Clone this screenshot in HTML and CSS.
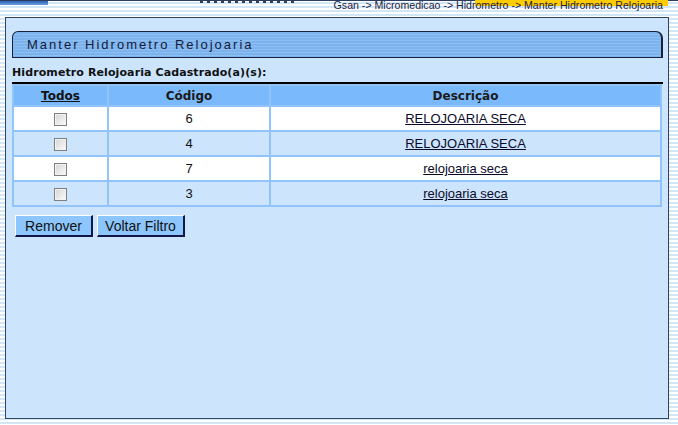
FILE: index.html
```html
<!DOCTYPE html>
<html lang="pt">
<head>
    <meta charset="UTF-8">
    <title>Manter Hidrometro Relojoaria</title>
    <link rel="stylesheet" href="styles.css">
</head>
<body>

<div class="top">
    <div class="top__logo"></div>
    <div class="top__marks"></div>
    <div class="top__crumb">
        Gsan -&gt; Micromedicao -&gt; Hidrometro -&gt; Manter Hidrometro Relojoaria
    </div>
</div>

<div class="panel">
    <div class="panel__tab">Manter Hidrometro Relojoaria</div>

    <div class="panel__label">Hidrometro Relojoaria Cadastrado(a)(s):</div>

    <table class="grid">
        <tr class="grid__head">
            <th class="grid__check"><a href="#">Todos</a></th>
            <th class="grid__code">Código</th>
            <th>Descrição</th>
        </tr>
        <tr class="grid__row grid__row--white">
            <td><span class="box"></span></td>
            <td>6</td>
            <td><a href="#">RELOJOARIA SECA</a></td>
        </tr>
        <tr class="grid__row">
            <td><span class="box"></span></td>
            <td>4</td>
            <td><a href="#">RELOJOARIA SECA</a></td>
        </tr>
        <tr class="grid__row grid__row--white">
            <td><span class="box"></span></td>
            <td>7</td>
            <td><a href="#">relojoaria seca</a></td>
        </tr>
        <tr class="grid__row">
            <td><span class="box"></span></td>
            <td>3</td>
            <td><a href="#">relojoaria seca</a></td>
        </tr>
    </table>

    <div class="actions">
        <button class="btn btn--remove">Remover</button>
        <button class="btn btn--back">Voltar Filtro</button>
    </div>
</div>

</body>
</html>
```

FILE: styles.css
```css
* {
    box-sizing: border-box;
}

body {
    margin: 0;
    font-family: "Liberation Sans", Arial, sans-serif;
    background: repeating-linear-gradient(180deg, #ffffff 0, #ffffff 2px, #d3e6f6 2px, #d3e6f6 4px);
    width: 678px;
    height: 425px;
    overflow: hidden;
}

.top {
    height: 17px;
    display: flex;
    border-top: 1px solid #2b3d60;
}

.top__logo {
    width: 48px;
    height: 4px;
    background: linear-gradient(180deg, #2e5fb0, #6b9ee2);
}

.top__marks {
    width: 95px;
    height: 2px;
    margin-left: 152px;
    background: repeating-linear-gradient(90deg, #3a3f55 0, #3a3f55 3px, transparent 3px, transparent 7px);
}

.top__crumb {
    flex: 1;
    text-align: right;
    font-size: 10.6px;
    color: #1b2140;
    line-height: 11px;
    padding-right: 15px;
    margin-top: -1px;
    background: linear-gradient(180deg, #ffcc00 0, #ffcc00 6px, transparent 6px) no-repeat;
    background-position: right 10px top 0;
    background-size: 193px 100%;
}

.panel {
    margin-left: 5px;
    width: 664px;
    height: 402px;
    border: 1px solid #2f4560;
    background: #cce4fc;
    padding: 13px 5px 0 6px;
}

.panel__tab {
    height: 27px;
    border: 1px solid #16233a;
    border-right-width: 2px;
    border-radius: 6px 7px 0 0;
    background: repeating-linear-gradient(180deg, #7db3ec 0, #7db3ec 2px, #8ebff3 2px, #8ebff3 3px);
    font-size: 13px;
    letter-spacing: 2px;
    color: #141a3a;
    line-height: 25px;
    padding-left: 14px;
}

.panel__label {
    font-family: "DejaVu Sans", Verdana, sans-serif;
    font-weight: bold;
    font-size: 11px;
    letter-spacing: 0.1px;
    color: #111;
    margin-top: 8px;
    height: 18px;
    line-height: 14px;
    border-bottom: 2px solid #000;
}

.grid {
    width: 650px;
    border-spacing: 2px;
    background: #90c4fa;
    margin-top: 0;
}

.grid th {
    font-family: "DejaVu Sans", Verdana, sans-serif;
    font-size: 12px;
    font-weight: bold;
    color: #1a1a1a;
    background: #7ab9fc;
    height: 19px;
    padding: 0;
}

.grid th a {
    color: #111;
}

.grid__check {
    width: 93px;
}

.grid__code {
    width: 160px;
}

.grid td {
    text-align: center;
    font-size: 13px;
    color: #111;
    height: 23px;
    padding: 0;
    background: #cce4fc;
}

.grid__row--white td {
    background: #ffffff;
}

.grid td a {
    color: #0a0a28;
}

.box {
    display: inline-block;
    width: 13px;
    height: 13px;
    border: 1px solid #7f7f7f;
    box-shadow: inset 0 0 0 1px #f2f2f2;
    background: linear-gradient(135deg, #d4d4d4, #fbfbfb);
    vertical-align: middle;
}

.actions {
    display: flex;
    gap: 4px;
    margin-top: 8px;
    padding-left: 3px;
}

.btn {
    font-family: "Liberation Sans", Arial, sans-serif;
    font-size: 14px;
    color: #111;
    background: #8cc6fc;
    height: 22px;
    border: 1px solid #ffffff;
    border-right: 2px solid #10184a;
    border-bottom: 2px solid #10184a;
    padding: 0;
}

.btn--remove {
    width: 78px;
}

.btn--back {
    width: 88px;
}
```
